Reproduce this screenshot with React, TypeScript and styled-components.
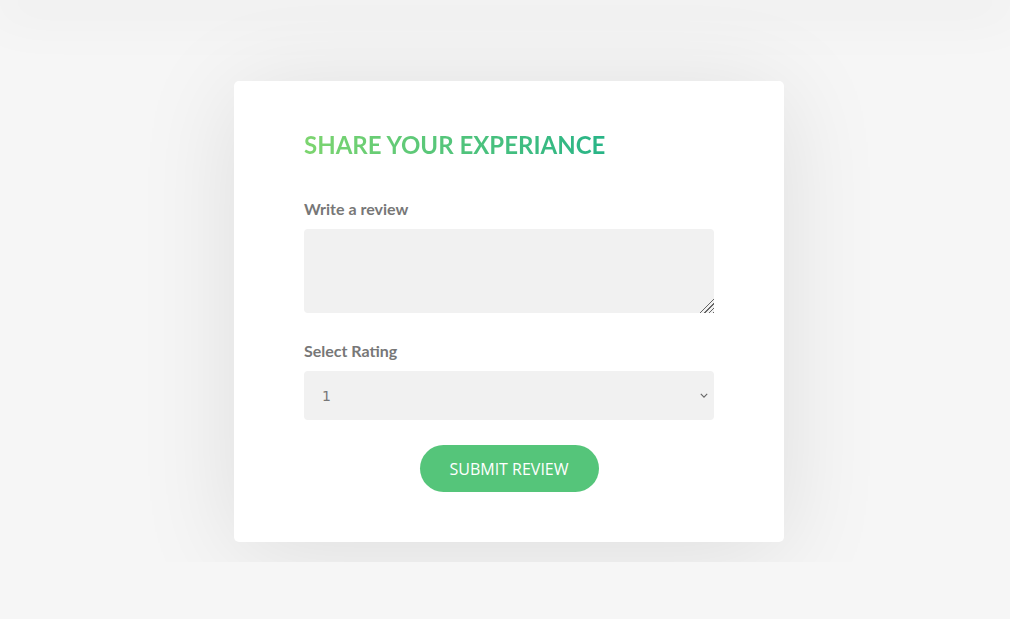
import styled, { createGlobalStyle } from 'styled-components';

const GlobalStyle = createGlobalStyle`
  * {
    box-sizing: border-box;
  }
  html,
  body {
    margin: 0;
    padding: 0;
    background: #f6f6f6;
    font-family: 'Lato', 'Open Sans', sans-serif;
  }
`;

const ratings = [1, 2, 3, 4, 5];

const App = () => {
  return (
    <>
      <GlobalStyle />
      <Header />
      <Main>
        <Card>
          <Title>Share your experiance</Title>
          <Field>
            <Label htmlFor="review">Write a review</Label>
            <TextArea id="review" />
          </Field>
          <Field $gap={28}>
            <Label htmlFor="rating">Select Rating</Label>
            <SelectWrap>
              <Select id="rating" defaultValue="1">
                {ratings.map(r => (
                  <option key={r} value={r}>
                    {r}
                  </option>
                ))}
              </Select>
              <Chevron viewBox="0 0 10 6" aria-hidden="true">
                <path d="M1 1l4 4 4-4" />
              </Chevron>
            </SelectWrap>
          </Field>
          <Actions>
            <SubmitButton type="button">Submit review</SubmitButton>
          </Actions>
        </Card>
      </Main>
    </>
  );
};

const Header = styled.header`
  position: relative;
  z-index: 2;
  height: 0;
  box-shadow: 0 0 60px 8px rgba(0, 0, 0, 0.09);
`;

const Main = styled.main`
  overflow: hidden;
  padding: 81px 0 20px 8px;
`;

const Card = styled.div`
  width: 550px;
  margin: 0 auto;
  padding: 50px 70px 50px;
  background: #fff;
  border-radius: 5px;
  box-shadow: 0 10px 100px rgba(0, 0, 0, 0.1);
`;

const Title = styled.h2`
  display: inline-block;
  margin: 0 0 39px;
  font-family: 'Lato', sans-serif;
  font-size: 24px;
  font-weight: 700;
  line-height: 1.2;
  text-transform: uppercase;
  background-image: linear-gradient(to right, #7dd56f, #28b487);
  -webkit-background-clip: text;
  background-clip: text;
  color: transparent;
`;

const Field = styled.div<{ $gap?: number }>`
  display: flex;
  flex-direction: column;
  margin-top: ${props => props.$gap ?? 0}px;
`;

const Label = styled.label`
  font-family: 'Lato', sans-serif;
  font-size: 16px;
  font-weight: 700;
  line-height: 1.2;
  color: #777;
  margin-bottom: 11px;
`;

const TextArea = styled.textarea`
  display: block;
  width: 100%;
  height: 84px;
  border: none;
  border-radius: 4px;
  background: #f1f1f1;
  padding: 12px 18px;
  font-family: 'Open Sans', sans-serif;
  font-size: 15px;
  color: #777;
  outline: none;

  &::-webkit-resizer {
    background:
      linear-gradient(135deg, #f1f1f1 52%, transparent 52%),
      repeating-linear-gradient(135deg, #f1f1f1 0 2px, #666 2px 3px);
  }
`;

const SelectWrap = styled.div`
  position: relative;
`;

const Select = styled.select`
  display: block;
  width: 100%;
  height: 49px;
  border: none;
  border-radius: 4px;
  background: #f1f1f1;
  padding: 0 18px;
  font-family: 'DejaVu Sans', sans-serif;
  font-size: 14px;
  color: #777;
  outline: none;
  appearance: none;
  -webkit-appearance: none;
`;

const Chevron = styled.svg`
  position: absolute;
  right: 6px;
  top: 22px;
  width: 8px;
  height: 5px;
  fill: none;
  stroke: #666;
  stroke-width: 1.4;
  pointer-events: none;
`;

const Actions = styled.div`
  display: flex;
  justify-content: center;
  margin-top: 25px;
`;

const SubmitButton = styled.button`
  width: 179px;
  height: 47px;
  border: none;
  border-radius: 24px;
  background: #55c57a;
  color: #fff;
  font-family: 'Open Sans', sans-serif;
  font-size: 16px;
  text-transform: uppercase;
  cursor: pointer;
`;

export default App;
